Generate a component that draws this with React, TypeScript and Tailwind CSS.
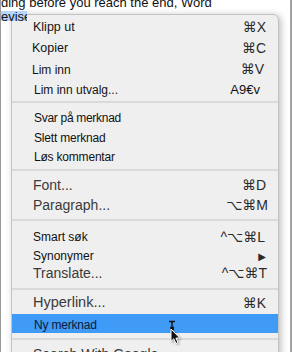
const font = { fontFamily: "'Liberation Sans', 'DejaVu Sans', sans-serif" };

function Row({
  label,
  shortcut,
  h,
  cls,
  keyCls = "pr-[12px]",
}: {
  label: string;
  shortcut?: string;
  h: string;
  cls: string;
  keyCls?: string;
}) {
  return (
    <div className={`flex items-center justify-between ${h}`}>
      <span className={`whitespace-nowrap ${cls}`}>{label}</span>
      {shortcut && (
        <span className={`text-[14px] text-[#2a2a2a] ${keyCls}`} style={font}>
          {shortcut}
        </span>
      )}
    </div>
  );
}

function Sep({ pt }: { pt: string }) {
  return (
    <div className={pt}>
      <div className="h-[2px] bg-[#dadada]" />
    </div>
  );
}

function Pointer() {
  return (
    <svg
      className="absolute left-[155px] top-[6px]"
      width="16"
      height="26"
      viewBox="0 0 16 26"
    >
      {/* i-beam */}
      <path d="M2 1.5h6M5 1.5v5" stroke="#111" strokeWidth="1.4" fill="none" />
      <rect x="3.3" y="6.5" width="3.6" height="3.6" fill="#111" />
      {/* arrow */}
      <path
        d="M4 9 L4 21.5 L6.8 18.8 L9 23.5 L11 22.6 L8.9 18.1 L12.8 18.1 Z"
        fill="#111"
        stroke="#fff"
        strokeWidth="1"
        strokeLinejoin="round"
        style={{ filter: "drop-shadow(1px 1px 1px rgba(0,0,0,0.35))" }}
      />
    </svg>
  );
}

export default function App() {
  return (
    <div
      className="relative w-[292px] h-[352px] overflow-hidden bg-white border-l border-l-[#9c9c9c] border-r-2 border-r-[#a2a2a2]"
      style={font}
    >
      <div className="relative z-10 -mt-[5px] text-[13px] text-[#111]">
        <div className="h-[16px] leading-[15px] whitespace-nowrap">ding before you reach the end, Word</div>
        <div className="h-[10px] w-[26px] overflow-hidden bg-[#b6d6fb]">
          <div className="-mt-[1px] leading-[14px]">evise</div>
        </div>
      </div>

      <div className="absolute left-[10px] top-[14px] w-[268px] h-[360px] rounded-t-[6px] border border-[#c2c2c2] bg-[#efefef] shadow-[2px_1px_7px_rgba(0,0,0,0.25)] pt-[2px]">
        <div className="pl-[21px] text-[#141414]">
          <Row h="h-[21px]" label="Klipp ut" shortcut="⌘X" cls="text-[12.5px]" />
          <Row h="h-[21px]" label="Kopier" shortcut="⌘C" cls="text-[12.5px] -ml-[1px]" />
          <Row h="h-[21px]" label="Lim inn" shortcut="⌘V" cls="text-[12px] -ml-[1px]" keyCls="pr-[14px]" />
          <Row
            h="h-[19px]"
            label="Lim inn utvalg..."
            shortcut="A9€v"
            cls="text-[12px] ml-[1px]"
            keyCls="pr-[18px] !text-[13px] !text-[#111]"
          />
        </div>
        <Sep pt="pt-[2px] pb-[4px]" />
        <div className="pl-[22px] text-[#111]">
          <Row h="h-[22px]" label="Svar på merknad" cls="text-[12px] tracking-[-0.3px]" />
          <Row h="h-[18px]" label="Slett merknad" cls="text-[12px] tracking-[-0.2px]" />
          <Row h="h-[20px]" label="Løs kommentar" cls="text-[12px] tracking-[-0.2px]" />
        </div>
        <Sep pt="pt-[2px] pb-[4px]" />
        <div className="pl-[21px] text-[#3a3a3a]">
          <Row h="h-[21px]" label="Font..." shortcut="⌘D" cls="text-[14px]" />
          <Row h="h-[19px]" label="Paragraph..." shortcut="⌥⌘M" cls="text-[14px]" keyCls="pr-[10px]" />
        </div>
        <Sep pt="pt-[4px] pb-[4px]" />
        <div className="pl-[21px] text-[#111]">
          <Row h="h-[24px]" label="Smart søk" shortcut="^⌥⌘L" cls="text-[12px]" keyCls="pr-[13px]" />
          <Row h="h-[14px]" label="Synonymer" shortcut="▶" cls="text-[12px]" keyCls="pr-[12px] !text-[10px]" />
          <Row h="h-[20px]" label="Translate..." shortcut="^⌥⌘T" cls="text-[14px] text-[#3a3a3a]" keyCls="pr-[11px]" />
        </div>
        <Sep pt="pt-[5px] pb-[2px]" />
        <div className="pl-[21px] text-[#3a3a3a]">
          <Row h="h-[22px]" label="Hyperlink..." shortcut="⌘K" cls="text-[14.5px]" />
        </div>
        <div className="relative flex h-[19px] items-end bg-[#409bf7] pl-[22px]">
          <span className="text-[12px] leading-[15px] tracking-[-0.2px] text-[#0b1a3a]">Ny merknad</span>
          <Pointer />
        </div>
        <Sep pt="pt-[5px] pb-[4px]" />
        <div className="pl-[21px] text-[14px] text-[#3a3a3a]">Search With Google</div>
      </div>
    </div>
  );
}
